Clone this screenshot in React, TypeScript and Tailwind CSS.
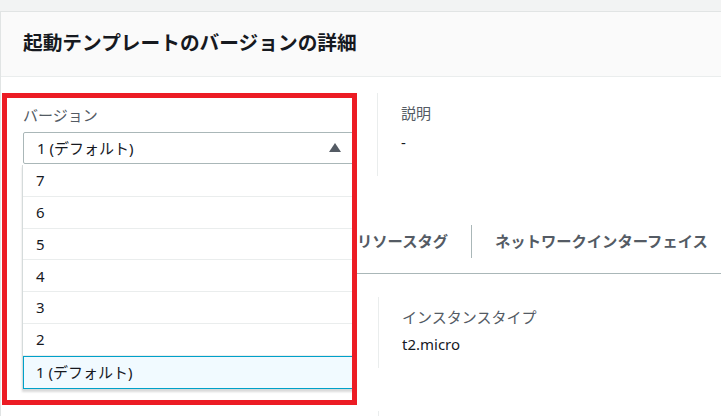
const versions = ["7", "6", "5", "4", "3", "2"];

function Field({ label, value, gap = "mt-[7px]" }: { label: string; value?: string; gap?: string }) {
  return (
    <div className="ml-[22px] border-l border-[#eaeded] pl-[23px] pt-[9px]">
      {label && <div className="text-[15px] leading-[22px] text-[#545b64]">{label}</div>}
      {value && <div className={`${gap} text-[15px] leading-[22px] text-[#16191f]`}>{value}</div>}
    </div>
  );
}

export default function App() {
  return (
    <div className="relative h-[416px] w-full overflow-hidden bg-[#f2f3f3] pt-[11px] font-['Noto_Sans','Noto_Sans_CJK_JP',sans-serif]">
      <div className="h-full border-l border-t border-[#e1e4e4] bg-white">
        <div className="flex h-[65px] items-center border-b border-[#eaeded] bg-[#fafafa] pb-[2px] pl-[22px]">
          <h2 className="text-[19.7px] font-bold leading-none text-[#16191f]">
            起動テンプレートのバージョンの詳細
          </h2>
        </div>

        <div className="pl-[22px]">
          {/* version select + description */}
          <div className="mt-[16px] flex h-[83px]">
            <div className="w-[332px] shrink-0 pt-[11px]">
              <div className="text-[15px] leading-[22px] text-[#545b64]">バージョン</div>
              <div className="mt-[6px] flex h-[32px] items-center rounded-[2px] border border-[#aab7b8] pl-[13px] text-[15px] text-[#16191f]">
                1 (デフォルト)
              </div>
            </div>
            <Field label="説明" value="-" />
          </div>

          {/* tabs */}
          <div className="mt-[33px] flex h-[65px] items-center whitespace-nowrap border-b border-[#aab7b8] text-[15.3px] font-bold text-[#545b64]">
            <div className="w-[182px] shrink-0 overflow-hidden px-[23px]">インスタンスの詳細</div>
            <div className="h-[33px] w-px shrink-0 bg-[#aab7b8]" />
            <div className="w-[127px] shrink-0 overflow-hidden px-[23px]">ストレージ</div>
            <div className="h-[33px] w-px shrink-0 bg-[#aab7b8]" />
            <div className="shrink-0 px-[23px]">リソースタグ</div>
            <div className="h-[33px] w-px shrink-0 bg-[#aab7b8]" />
            <div className="shrink-0 px-[23px]">ネットワークインターフェイス</div>
          </div>

          {/* instance details */}
          <div className="mt-[23px] flex h-[71px]">
            <div className="w-[333px] shrink-0" />
            <Field label="インスタンスタイプ" value="t2.micro" gap="mt-[5px]" />
          </div>
          <div className="mt-[43px] flex h-[71px]">
            <div className="w-[333px] shrink-0" />
            <Field label="" />
          </div>
        </div>
      </div>

      {/* open dropdown */}
      <div className="absolute left-[22px] top-[165px] w-[334px] border-x border-b border-[#d5dbdb] bg-white text-[15px] text-[#16191f] shadow-[0_2px_2px_rgba(0,0,0,0.15)]">
        {versions.map((v) => (
          <div key={v} className="flex h-[31.8px] items-center border-b border-[#eaeded] pl-[13px]">
            {v}
          </div>
        ))}
        <div className="flex h-[33px] items-center border border-[#00a1c9] bg-[#f1faff] pl-[12px]">
          1 (デフォルト)
        </div>
      </div>

      {/* caret of the open select */}
      <svg className="absolute left-[329px] top-[143px]" width="12" height="9" viewBox="0 0 12 9">
        <polygon points="6,0 12,9 0,9" fill="#545b64" />
      </svg>

      {/* red annotation box */}
      <div className="pointer-events-none absolute left-[2px] top-[93px] h-[312px] w-[355px] border-[5px] border-[#ec1c24]" />
    </div>
  );
}
